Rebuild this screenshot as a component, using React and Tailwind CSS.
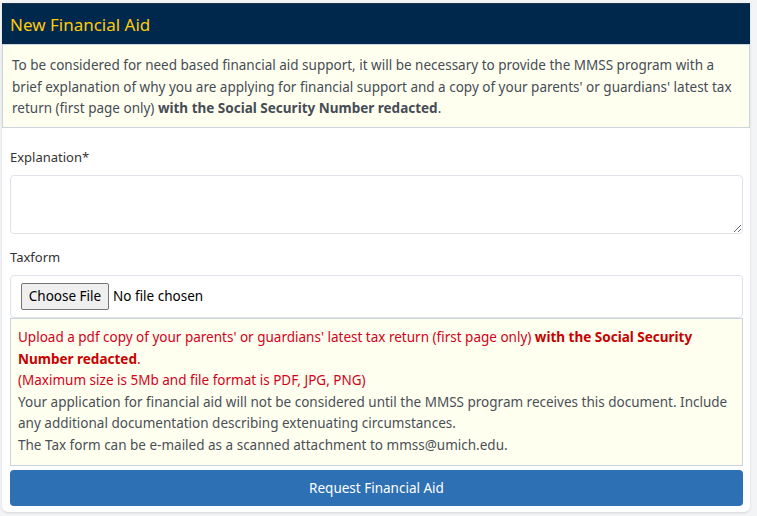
export default function App() {
  return (
    <div className="w-[757px] h-[516px] bg-[#f3f4f6] overflow-hidden font-['Noto_Sans',sans-serif]">
      <div className="ml-[2px] mt-[3px] w-[748px] h-[509px] bg-white rounded-b-md shadow-sm flex flex-col">
        <div className="h-[41px] bg-[#00274c] flex items-center px-[8px] border-t border-[#1b3552]">
          <h1 className="text-[17px] text-[#ffcb05] leading-none">New Financial Aid</h1>
        </div>
        <div className="h-[84px] bg-[#fffff0] border border-[#cbd3dc] px-[9px] pt-[10px] text-[13.5px] leading-[21.5px] text-[#464c55]">
          To be considered for need based financial aid support, it will be necessary to provide the MMSS program with a brief explanation of why you are applying for financial support and a copy of your parents' or guardians' latest tax return (first page only) <b className="font-bold">with the Social Security Number redacted</b>.
        </div>
        <div className="px-[8px] flex flex-col">
          <label className="mt-[19px] h-[20px] text-[13px] text-[#333] leading-[20px]">Explanation*</label>
          <textarea className="mt-[8px] h-[59px] w-[733px] border border-[#dfe2ea] rounded-[4px] resize-y outline-none"></textarea>
          <label className="mt-[13px] h-[20px] text-[13px] text-[#333] leading-[20px]">Taxform</label>
          <div className="mt-[8px] h-[43px] w-[733px] border border-[#dfe2ea] rounded-[4px] flex items-center px-[10px] gap-[4px]">
            <button className="h-[27px] w-[88px] bg-[#efefef] border border-[#767676] rounded-[2px] text-[13.5px] text-black">Choose File</button>
            <span className="text-[13.5px] text-black">No file chosen</span>
          </div>
          <div className="h-[148px] w-[733px] bg-[#fffff0] border border-[#cbd3dc] px-[7px] pt-[8px] text-[13.5px] leading-[21.5px] text-[#4a4f57]">
            <span className="text-[#d4001a]">Upload a pdf copy of your parents' or guardians' latest tax return (first page only) <b className="font-bold text-[#c80000]">with the Social Security Number redacted</b>.</span>
            <br />
            <span className="text-[#d4001a]">(Maximum size is 5Mb and file format is PDF, JPG, PNG)</span>
            <br />
            Your application for financial aid will not be considered until the MMSS program receives this document. Include any additional documentation describing extenuating circumstances.
            <br />
            The Tax form can be e-mailed as a scanned attachment to mmss@umich.edu.
          </div>
          <button className="mt-[4px] h-[36px] w-[733px] bg-[#2d70b4] rounded-[4px] text-white text-[13.5px]">Request Financial Aid</button>
        </div>
      </div>
    </div>
  );
}
